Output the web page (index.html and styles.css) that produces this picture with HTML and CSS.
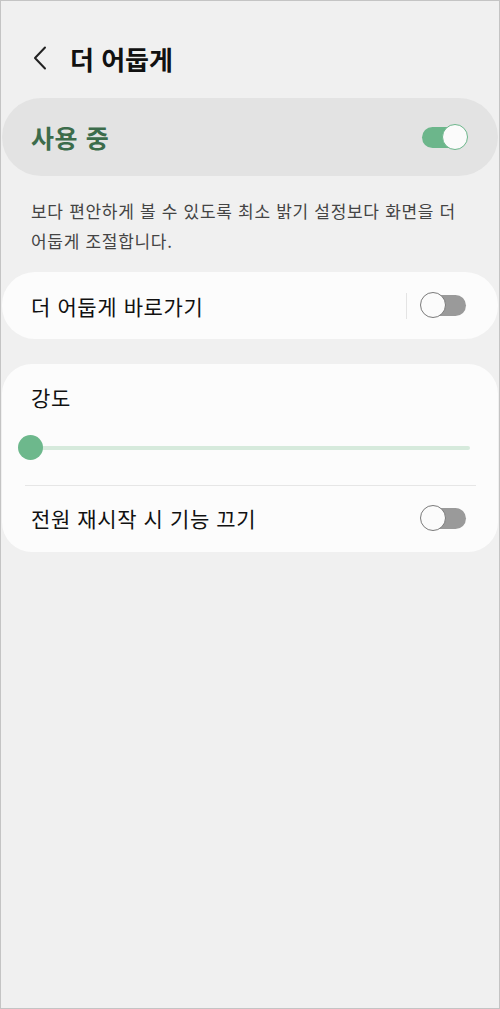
FILE: index.html
```html
<!DOCTYPE html>
<html lang="ko">
<head>
    <meta charset="utf-8">
    <title>더 어둡게</title>
    <link rel="stylesheet" href="styles.css">
</head>
<body>
    <div class="screen">
        <div class="appbar">
            <svg class="back" width="14" height="24" viewBox="0 0 14 24">
                <path d="M12 1.5 L2 12 L12 22.5" fill="none" stroke="#222" stroke-width="2" stroke-linecap="round" stroke-linejoin="round"/>
            </svg>
            <h1 class="title">더 어둡게</h1>
        </div>

        <div class="card master">
            <span class="master-label">사용 중</span>
            <span class="switch on"><span class="knob"></span></span>
        </div>

        <p class="desc">보다 편안하게 볼 수 있도록 최소 밝기 설정보다 화면을 더 어둡게 조절합니다.</p>

        <div class="card row shortcut">
            <span class="row-label">더 어둡게 바로가기</span>
            <span class="vline"></span>
            <span class="switch"><span class="knob"></span></span>
        </div>

        <div class="card group">
            <div class="group-label">강도</div>
            <div class="slider">
                <div class="track"></div>
                <div class="thumb"></div>
            </div>
            <div class="hline"></div>
            <div class="row">
                <span class="row-label">전원 재시작 시 기능 끄기</span>
                <span class="switch"><span class="knob"></span></span>
            </div>
        </div>
    </div>
</body>
</html>
```

FILE: styles.css
```css
body, html {
    margin: 0;
    font-family: "Noto Sans CJK KR", "Noto Sans", sans-serif;
    background-color: #f0f0f0;
}

.screen {
    height: 1009px;
    box-sizing: border-box;
    border: 1px solid #c4c4c4;
    background: #f0f0f0;
    padding: 0 1px;
}

.appbar {
    display: flex;
    align-items: center;
    height: 48px;
    padding: 33px 0 0 31px;
}

.back {
    margin-right: 23px;
}

.title {
    margin: 0;
    font-size: 26px;
    font-weight: 700;
    color: #111;
    letter-spacing: 0;
}

.card {
    background: #fcfcfc;
}

.master {
    display: flex;
    align-items: center;
    justify-content: space-between;
    margin-top: 16px;
    height: 78px;
    border-radius: 39px;
    background: #e3e3e3;
    padding: 0 32px 0 29px;
}

.master-label {
    font-size: 25px;
    font-weight: 700;
    color: #3c6c4b;
    letter-spacing: 0.6px;
}

.desc {
    margin: 20px 0 0;
    padding: 0 28px 0 29px;
    font-size: 17px;
    line-height: 30px;
    letter-spacing: 0.7px;
    color: #444;
}

.row {
    display: flex;
    align-items: center;
    padding: 0 32px 0 29px;
}

.row-label {
    flex: 1;
    font-size: 21px;
    letter-spacing: 0.6px;
    color: #111;
}

.shortcut {
    margin-top: 16px;
    height: 67px;
    border-radius: 33px;
}

.vline {
    width: 1px;
    height: 26px;
    background: #e4e4e4;
    margin-right: 13px;
}

.switch {
    position: relative;
    display: inline-block;
    width: 44px;
    height: 21px;
    border-radius: 11px;
    background: #9a9a9a;
    margin-left: 2px;
}

.switch .knob {
    position: absolute;
    top: -3px;
    left: -2px;
    width: 24px;
    height: 24px;
    border-radius: 50%;
    background: #fbfbfb;
    border: 1.5px solid #7a7a7a;
}

.switch.on {
    background: #6cb68b;
}

.switch.on .knob {
    left: auto;
    right: -2px;
    border-color: #6cb68b;
}

.group {
    margin-top: 25px;
    height: 188px;
    box-sizing: border-box;
    border-radius: 30px;
    padding-top: 18px;
}

.group-label {
    padding-left: 29px;
    font-size: 21px;
    letter-spacing: 0.6px;
    line-height: 30px;
    color: #111;
}

.slider {
    position: relative;
    height: 26px;
    margin: 23px 28px 0 16px;
}

.track {
    position: absolute;
    left: 12px;
    right: 0;
    top: 11px;
    height: 4px;
    border-radius: 2px;
    background: #d6eadc;
}

.thumb {
    position: absolute;
    left: 0;
    top: 0;
    width: 25px;
    height: 25px;
    border-radius: 50%;
    background: #6db88c;
}

.hline {
    height: 1px;
    background: #e6e6e6;
    margin: 24px 22px 0 23px;
}

.group .row {
    height: 64px;
}
```
